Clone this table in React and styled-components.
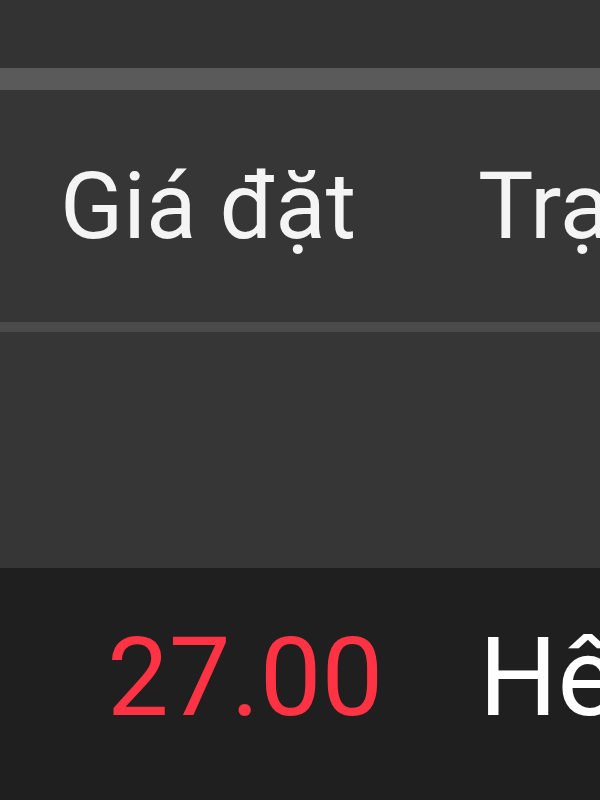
import React from "react";
import styled, { createGlobalStyle } from "styled-components";

const GlobalStyle = createGlobalStyle`
  html, body {
    margin: 0;
    padding: 0;
    background: #333333;
  }
  body {
    width: 600px;
    height: 800px;
    overflow: hidden;
    font-family: Roboto, "Noto Sans", sans-serif;
  }
`;

const Frame = styled.div`
  width: 600px;
  height: 800px;
  display: flex;
  flex-direction: column;
  overflow: hidden;
  box-shadow: inset 4px 0 0 #393939;
`;

const TopBar = styled.div`
  height: 68px;
  flex-shrink: 0;
  background: #333333;
`;

const Rule = styled.div`
  height: 22px;
  flex-shrink: 0;
  background: #5a5a5a;
`;

const Table = styled.div`
  display: grid;
  grid-template-columns: 420px 1fr;
  background: #363636;
`;

const HeadCell = styled.div`
  height: 232px;
  display: flex;
  align-items: center;
  padding-left: ${(p) => p.$indent}px;
  border-bottom: 10px solid #4a4a4a;
  color: #f4f4f4;
  font-size: 93px;
  line-height: 1;
  white-space: nowrap;
  overflow: hidden;
`;

const Spacer = styled.div`
  height: 236px;
  grid-column: 1 / -1;
`;

const BodyCell = styled.div`
  height: 240px;
  background: #1f1f1f;
  padding-left: ${(p) => p.$indent}px;
  padding-top: 55px;
  box-sizing: border-box;
  color: ${(p) => p.$color};
  font-size: 110px;
  line-height: 1;
  white-space: nowrap;
  overflow: hidden;
`;

export default function App() {
  return (
    <>
      <GlobalStyle />
      <Frame>
        <TopBar />
        <Rule />
        <Table>
          <HeadCell $indent={60}>Giá đặt</HeadCell>
          <HeadCell $indent={58}>Trạng thái</HeadCell>
          <Spacer />
          <BodyCell $indent={107} $color="#ff3343">27.00</BodyCell>
          <BodyCell $indent={59} $color="#ffffff">Hết hạn</BodyCell>
        </Table>
      </Frame>
    </>
  );
}
